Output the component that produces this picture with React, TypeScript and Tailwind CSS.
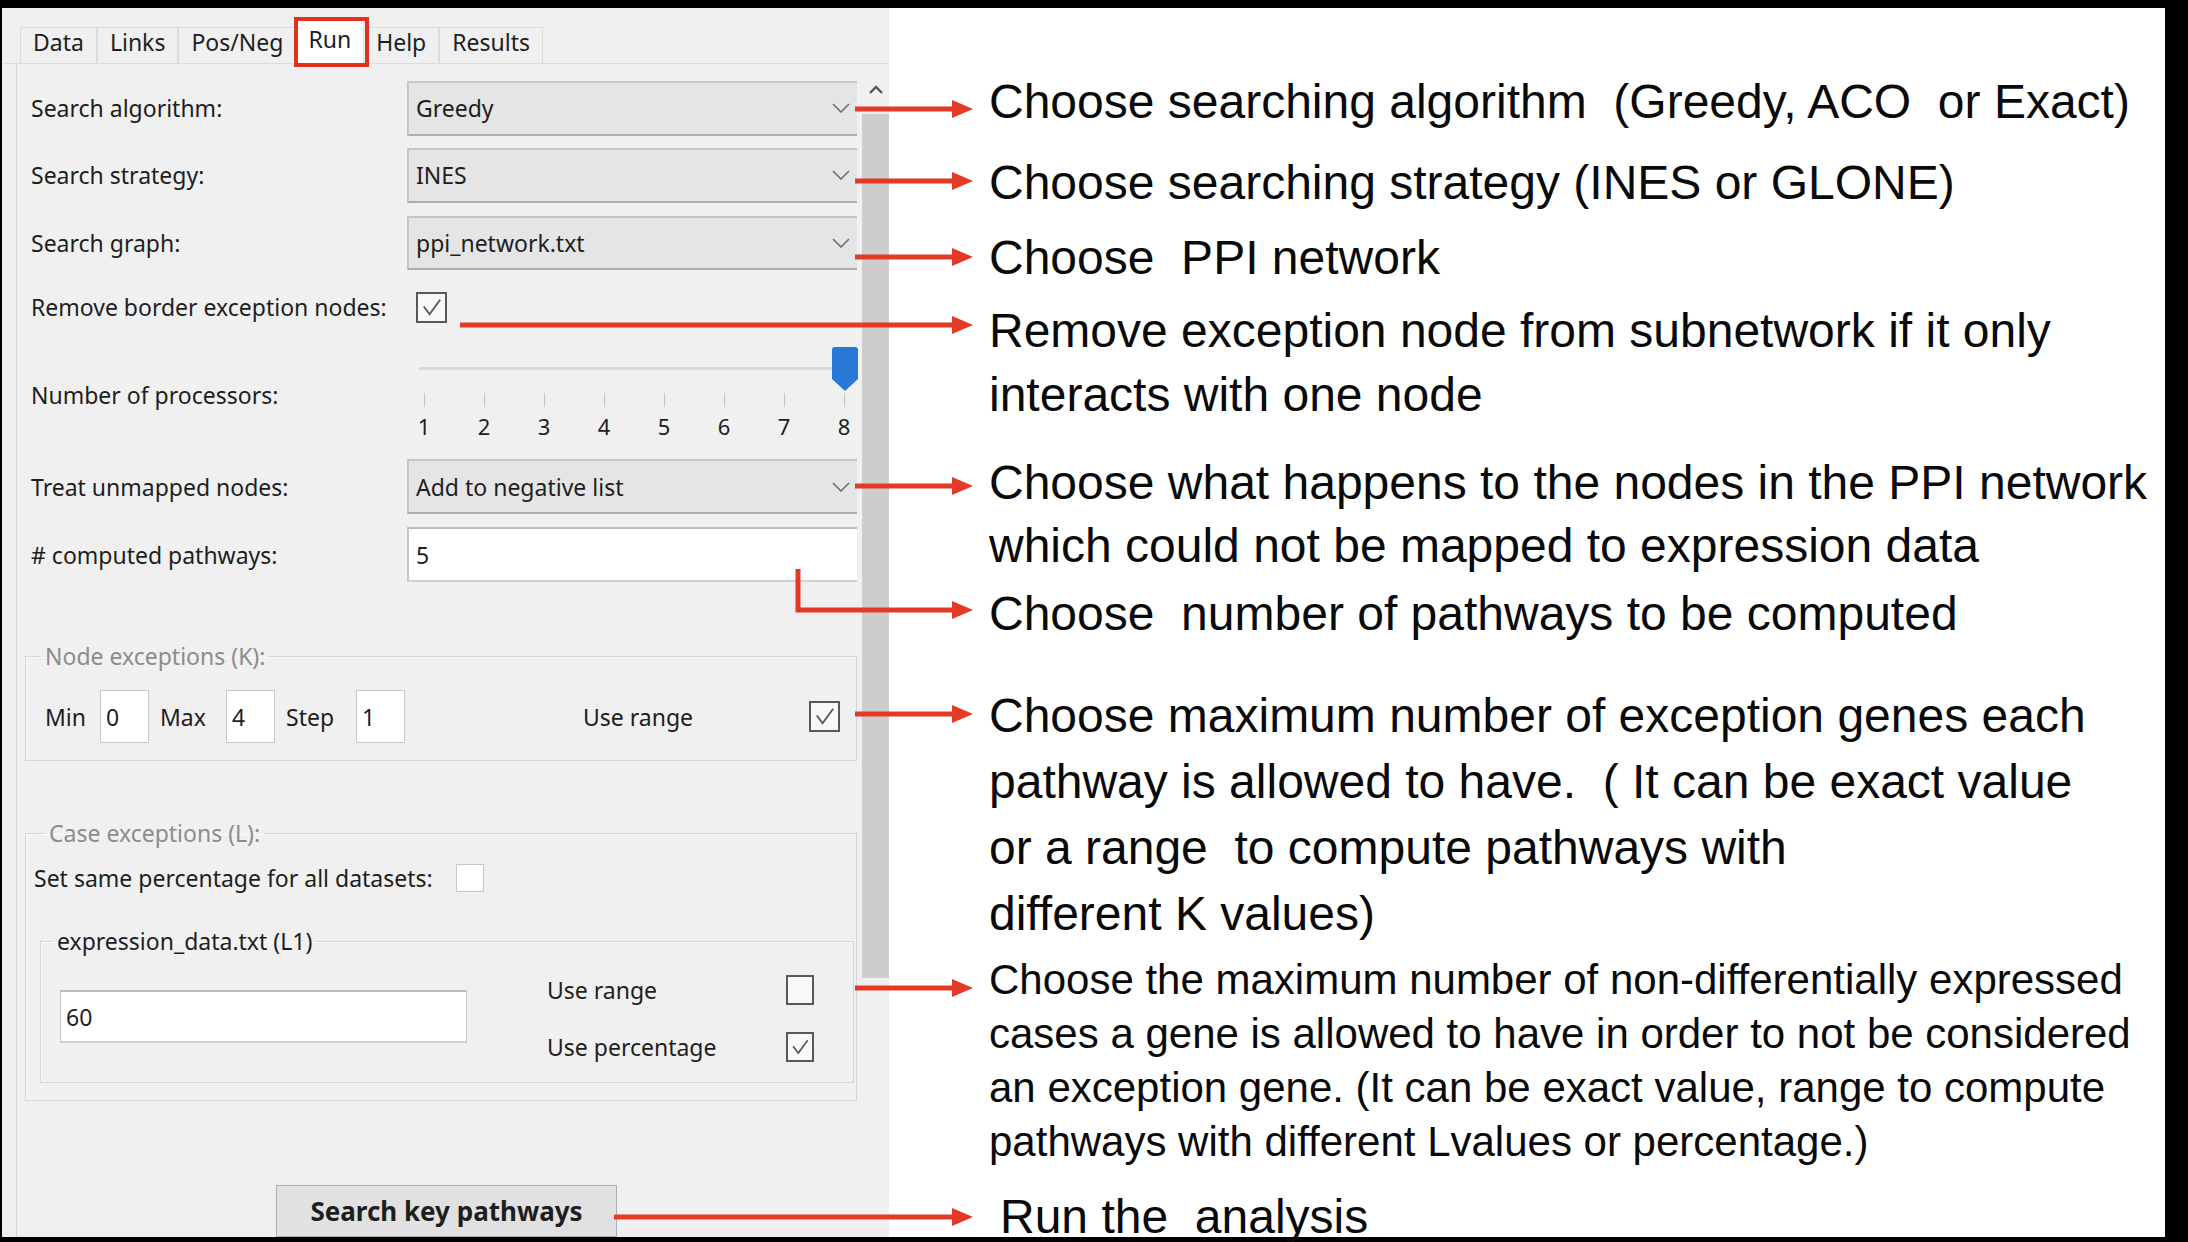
import React from 'react';

const RED = '#e23a26';

function Chevron() {
  return (
    <svg width="18" height="10" viewBox="0 0 18 10" className="shrink-0">
      <polyline points="1,1 9,9 17,1" fill="none" stroke="#6e6e6e" strokeWidth="1.6" />
    </svg>
  );
}

function Combo({ value }: { value: string }) {
  return (
    <div className="flex h-full w-[450px] items-center justify-between border-y-2 border-l-2 border-t-[#c6c6c6] border-b-[#adadad] border-l-[#c6c6c6] bg-[#e5e5e5] pl-[7px] pr-[7px]">
      <span>{value}</span>
      <Chevron />
    </div>
  );
}

function Check({ checked, className }: { checked: boolean; className: string }) {
  return (
    <div className={`shrink-0 border-2 border-[#585858] bg-[#f8f8f8] ${className}`}>
      {checked && (
        <svg viewBox="0 0 28 28" className="h-full w-full">
          <polyline points="6,13 12,21 23,6" fill="none" stroke="#5a5a5a" strokeWidth="2" />
        </svg>
      )}
    </div>
  );
}

function Row({ label, children, className }: { label: string; children: React.ReactNode; className: string }) {
  return (
    <div className={`flex items-center pl-[14px] ${className}`}>
      <div className="w-[376px] shrink-0">{label}</div>
      {children}
    </div>
  );
}

function Arrow({ pts }: { pts: [number, number][] }) {
  const [tx, ty] = pts[pts.length - 1];
  const line = [...pts.slice(0, -1), [tx - 18, ty]].map((p) => p.join(',')).join(' ');
  return (
    <g>
      <polyline points={line} fill="none" stroke={RED} strokeWidth="5" />
      <polygon points={`${tx - 21},${ty - 9} ${tx},${ty} ${tx - 21},${ty + 9}`} fill={RED} />
    </g>
  );
}

const tabs = ['Data', 'Links', 'Pos/Neg', 'Run', 'Help', 'Results'];
const ticks = [1, 2, 3, 4, 5, 6, 7, 8];

export default function App() {
  return (
    <div className="relative h-[1242px] w-[2188px] overflow-hidden bg-black">
      <div className="flex h-full pb-[5px] pl-[2px] pr-[23px] pt-[8px]">
        {/* app panel */}
        <div className="flex w-[887px] shrink-0 flex-col overflow-hidden bg-[#f0f0f0] font-['Noto_Sans',sans-serif] text-[23px] text-[#1e1e1e]">
          <div className="flex h-[55px] shrink-0 items-end pl-[18px]">
            {tabs.map((t) =>
              t === 'Run' ? (
                <div key={t} className="relative flex h-[42px] items-center bg-white px-[12px] leading-none">
                  <span className="-mt-[6px]">{t}</span>
                  <div className="absolute -bottom-[4px] -left-[2px] -right-[6px] -top-[4px] border-4 border-[#e0301e]" />
                </div>
              ) : (
                <div key={t} className="flex h-[36px] items-center border-x border-t border-[#dcdcdc] px-[12px] pb-[6px] leading-none">
                  {t}
                </div>
              )
            )}
          </div>

          <div className="flex min-h-0 flex-1 border-t border-[#dcdcdc]">
            <div className="ml-[14px] flex w-[846px] shrink-0 flex-col border-l border-[#d6d6d6] leading-[28px]">
              <Row label="Search algorithm:" className="mt-[17px] h-[56px]">
                <Combo value="Greedy" />
              </Row>
              <Row label="Search strategy:" className="mt-[12px] h-[56px]">
                <Combo value="INES" />
              </Row>
              <Row label="Search graph:" className="mt-[13px] h-[55px]">
                <Combo value="ppi_network.txt" />
              </Row>
              <Row label="Remove border exception nodes:" className="mt-[22px] h-[31px]">
                <Check checked className="ml-[9px] h-[31px] w-[31px]" />
              </Row>

              <div className="mt-[20px] flex h-[100px] pl-[14px]">
                <div className="w-[376px] shrink-0 pt-[38px]">Number of processors:</div>
                <div className="relative w-[450px]">
                  <div className="ml-[12px] mt-[24px] h-[3px] w-[432px] bg-[#dadada]" />
                  <svg width="26" height="45" viewBox="0 0 26 45" className="absolute left-[425px] top-[4px]">
                    <path d="M3 0 H23 Q26 0 26 3 V32 L13 44 L0 32 V3 Q0 0 3 0 Z" fill="#2a78d6" />
                  </svg>
                  <div className="ml-[5px] mt-[23px] flex w-[444px] justify-between">
                    {ticks.map((n) => (
                      <div key={n} className="flex w-[24px] flex-col items-center">
                        <div className="h-[14px] w-[1px] bg-[#c4c4c4]" />
                        <div className="mt-[6px] text-[22px] leading-[26px]">{n}</div>
                      </div>
                    ))}
                  </div>
                </div>
              </div>

              <Row label="Treat unmapped nodes:" className="mt-[18px] h-[56px]">
                <Combo value="Add to negative list" />
              </Row>
              <Row label="# computed pathways:" className="mt-[13px] h-[56px]">
                <div className="flex h-full w-[450px] items-center border-y-2 border-l-2 border-t-[#bcbcbc] border-b-[#d0d0d0] border-l-[#c6c6c6] bg-white pl-[7px]">
                  5
                </div>
              </Row>

              <fieldset className="ml-[8px] mt-[60px] w-[832px] border border-[#d6d6d6] pb-[17px] pl-[19px] shadow-[inset_1px_1px_0_#fafafa]">
                <legend className="ml-[-4px] px-[4px] text-[#8c8c8c]">Node exceptions (K):</legend>
                <div className="mt-[20px] flex h-[53px] items-center">
                  <div className="w-[55px]">Min</div>
                  <div className="flex h-full w-[49px] items-center border border-[#c8c8c8] bg-white pl-[5px]">0</div>
                  <div className="ml-[11px] w-[66px]">Max</div>
                  <div className="flex h-full w-[49px] items-center border border-[#c8c8c8] bg-white pl-[5px]">4</div>
                  <div className="ml-[11px] w-[70px]">Step</div>
                  <div className="flex h-full w-[49px] items-center border border-[#c8c8c8] bg-white pl-[5px]">1</div>
                  <div className="ml-[178px] w-[226px]">Use range</div>
                  <Check checked className="h-[31px] w-[31px]" />
                </div>
              </fieldset>

              <fieldset className="ml-[8px] mt-[58px] w-[832px] border border-[#d6d6d6] pb-[17px] pl-[8px] pr-[2px] shadow-[inset_1px_1px_0_#fafafa]">
                <legend className="ml-[11px] px-[4px] text-[#8c8c8c]">Case exceptions (L):</legend>
                <div className="mt-[17px] flex h-[28px] items-center">
                  <div className="w-[422px]">Set same percentage for all datasets:</div>
                  <div className="h-[28px] w-[28px] border border-[#c8c8c8] bg-white" />
                </div>
                <fieldset className="ml-[6px] mt-[35px] border border-[#d6d6d6] pb-[20px] pl-[19px] shadow-[inset_1px_1px_0_#fafafa]">
                  <legend className="ml-[-7px] px-[4px]">expression_data.txt (L1)</legend>
                  <div className="flex items-start">
                    <div className="mt-[35px] flex h-[53px] w-[407px] items-center border-y-2 border-x border-t-[#bcbcbc] border-b-[#d0d0d0] border-x-[#c8c8c8] bg-white pl-[5px]">
                      60
                    </div>
                    <div className="ml-[80px] mt-[20px] flex flex-col gap-[27px]">
                      <div className="flex h-[30px] items-center">
                        <div className="w-[239px]">Use range</div>
                        <Check checked={false} className="h-[30px] w-[28px]" />
                      </div>
                      <div className="flex h-[30px] items-center">
                        <div className="w-[239px]">Use percentage</div>
                        <Check checked className="h-[30px] w-[28px]" />
                      </div>
                    </div>
                  </div>
                </fieldset>
              </fieldset>

              <div className="ml-[259px] mt-[84px] flex h-[52px] w-[341px] shrink-0 items-center justify-center border border-[#adadad] bg-[#e1e1e1] text-[26px] font-bold">
                Search key pathways
              </div>
            </div>

            {/* scrollbar */}
            <div className="flex w-[27px] shrink-0 flex-col">
              <div className="flex h-[50px] items-center justify-center">
                <svg width="14" height="9" viewBox="0 0 14 9">
                  <polyline points="1,8 7,2 13,8" fill="none" stroke="#555" strokeWidth="2.4" />
                </svg>
              </div>
              <div className="h-[864px] bg-[#cdcdcd]" />
            </div>
          </div>
        </div>

        {/* annotations */}
        <div className="flex flex-1 flex-col bg-white pl-[100px] font-['Liberation_Sans',Arial,sans-serif] text-[48px] text-[#0a0a0a]">
          <p className="mt-[61px] whitespace-pre leading-[66px]">Choose searching algorithm  (Greedy, ACO  or Exact)</p>
          <p className="mt-[15px] whitespace-pre leading-[66px]">Choose searching strategy (INES or GLONE)</p>
          <p className="mt-[9px] whitespace-pre leading-[66px]">Choose  PPI network</p>
          <p className="mt-[8px] whitespace-pre leading-[64px]">
            {'Remove exception node from subnetwork if it only\ninteracts with one node'}
          </p>
          <p className="mt-[24px] whitespace-pre leading-[63px]">
            {'Choose what happens to the nodes in the PPI network\nwhich could not be mapped to expression data'}
          </p>
          <p className="mt-[4px] whitespace-pre leading-[66px]">Choose  number of pathways to be computed</p>
          <p className="mt-[36px] whitespace-pre leading-[66px]">
            {'Choose maximum number of exception genes each\npathway is allowed to have.  ( It can be exact value\nor a range  to compute pathways with\ndifferent K values)'}
          </p>
          <p className="mt-[6px] whitespace-pre text-[42px] leading-[54px]">
            {'Choose the maximum number of non-differentially expressed\ncases a gene is allowed to have in order to not be considered\nan exception gene. (It can be exact value, range to compute\npathways with different Lvalues or percentage.)'}
          </p>
          <p className="ml-[11px] mt-[15px] whitespace-pre leading-[66px]">Run the  analysis</p>
        </div>
      </div>

      <svg className="pointer-events-none absolute left-0 top-0" width="2188" height="1242">
        <Arrow pts={[[855, 109], [973, 109]]} />
        <Arrow pts={[[855, 181], [973, 181]]} />
        <Arrow pts={[[855, 257], [973, 257]]} />
        <Arrow pts={[[460, 325], [973, 325]]} />
        <Arrow pts={[[855, 486], [973, 486]]} />
        <Arrow pts={[[798, 569], [798, 610], [973, 610]]} />
        <Arrow pts={[[855, 714], [973, 714]]} />
        <Arrow pts={[[855, 988], [973, 988]]} />
        <Arrow pts={[[614, 1217], [973, 1217]]} />
      </svg>
    </div>
  );
}
